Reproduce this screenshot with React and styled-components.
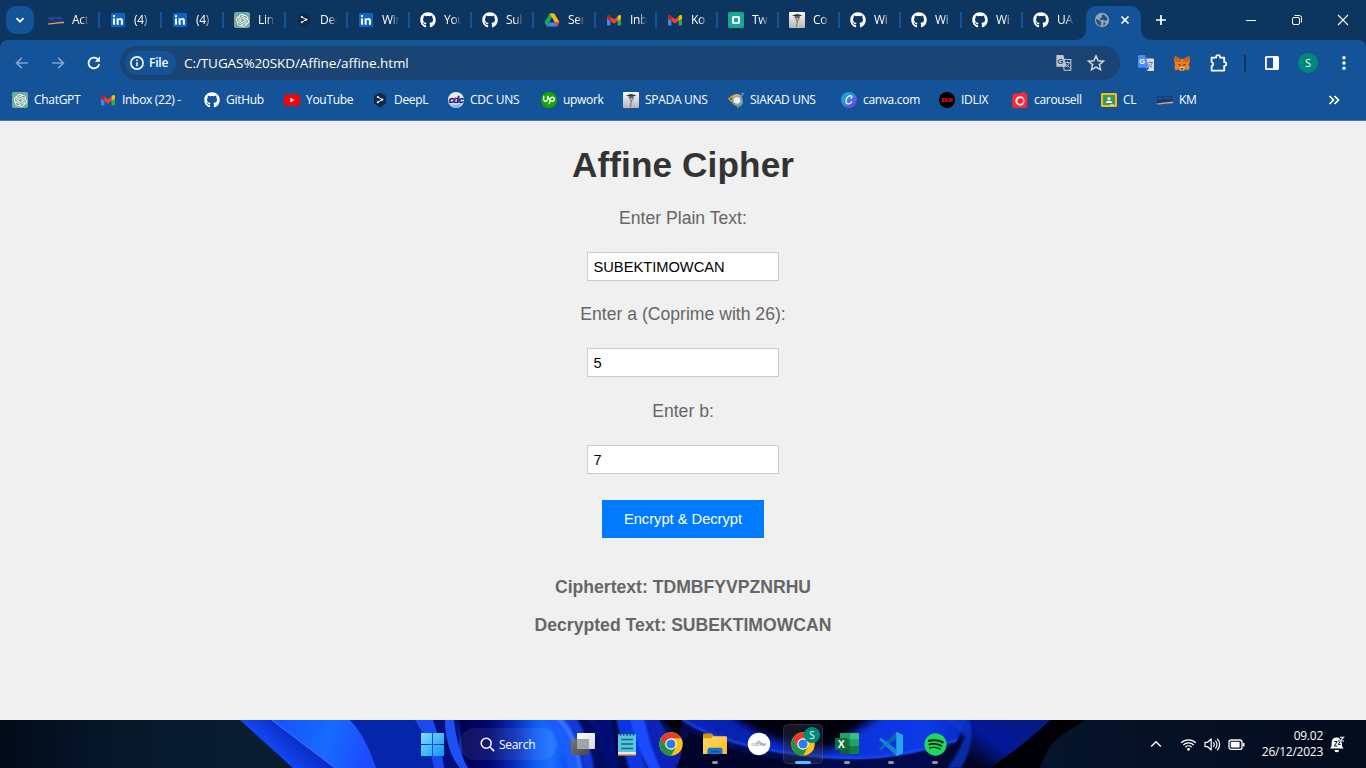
import React from 'react';
import styled, { createGlobalStyle, css } from 'styled-components';
import { FaGithub, FaSpotify } from 'react-icons/fa';
import { SiOpenai, SiUpwork } from 'react-icons/si';

const GlobalStyle = createGlobalStyle`
  * { box-sizing: border-box; }
  body { margin: 0; overflow: hidden; }
  svg { display: block; flex: none; }
`;

const uiFont = css`font-family: 'Open Sans', 'Noto Sans', sans-serif;`;

const Screen = styled.div`
  width: 1366px;
  height: 768px;
  display: flex;
  flex-direction: column;
  overflow: hidden;
  background: #f0f0f0;
`;

/* ---------- Browser chrome ---------- */

const TabStrip = styled.div`
  ${uiFont}
  height: 40px;
  flex: none;
  display: flex;
  background: #0c3560;
  color: #fff;
  padding-left: 6px;
`;

const TabSearch = styled.button`
  width: 28px;
  height: 28px;
  margin: 6px 4px 0 0;
  padding: 0;
  border: 0;
  border-radius: 10px;
  background: #155399;
  display: flex;
  align-items: center;
  justify-content: center;
`;

const Tab = styled.div`
  width: ${(p) => p.$width}px;
  flex: none;
  height: 40px;
  display: flex;
  align-items: center;
  gap: 8px;
  padding-left: 10px;
  background: linear-gradient(#155399, #155399) no-repeat right 12px / 2px 16px;
  background-size: ${(p) => (p.$last ? '0 0' : '2px 16px')};
`;

const TabTitle = styled.span`
  width: 17px;
  overflow: hidden;
  white-space: nowrap;
  font-size: 12px;
  line-height: 18px;
  letter-spacing: -0.3px;
  mask-image: linear-gradient(90deg, #000 50%, transparent 100%);
`;

const ActiveTab = styled.div`
  width: 55px;
  height: 34px;
  margin: 6px 0 0 2px;
  padding: 0 10px 6px 8px;
  border-radius: 10px 10px 0 0;
  background: #155399;
  display: flex;
  align-items: center;
  justify-content: space-between;
  position: relative;
  &::before, &::after {
    content: '';
    position: absolute;
    bottom: 0;
    width: 10px;
    height: 10px;
  }
  &::before {
    left: -10px;
    background: radial-gradient(circle at 0 0, transparent 9.6px, #155399 10.2px);
  }
  &::after {
    right: -10px;
    background: radial-gradient(circle at 100% 0, transparent 9.6px, #155399 10.2px);
  }
`;

const StripButton = styled.div`
  width: ${(p) => p.$width}px;
  height: 40px;
  flex: none;
  display: flex;
  align-items: center;
  justify-content: center;
`;

const WindowControls = styled.div`
  display: flex;
  margin-left: auto;
`;

const ChromeBody = styled.div`
  background: #0c3560;
  flex: none;
`;

const Toolbar = styled.div`
  ${uiFont}
  height: 46px;
  padding: 0 4px;
  border-radius: 8px 8px 0 0;
  background: #155399;
  display: flex;
  align-items: center;
  color: #fff;
`;

const ToolButton = styled.div`
  width: 36px;
  height: 36px;
  display: flex;
  align-items: center;
  justify-content: center;
  flex: none;
`;

const Omnibox = styled.div`
  width: 1000px;
  height: 34px;
  margin: 0 8px;
  padding: 0 15px 0 5px;
  border-radius: 17px;
  background: #1a4473;
  display: flex;
  align-items: center;
`;

const SchemeChip = styled.div`
  width: 51px;
  height: 24px;
  border-radius: 12px;
  background: #155399;
  display: flex;
  align-items: center;
  gap: 5px;
  padding-left: 5px;
  font-size: 12px;
  font-weight: 600;
  letter-spacing: -0.2px;
  line-height: 24px;
`;

const Address = styled.span`
  margin-left: 8px;
  flex: 1;
  font-size: 13.5px;
  letter-spacing: -0.08px;
  line-height: 20px;
`;

const OmniActions = styled.div`
  display: flex;
  gap: 15px;
  align-items: center;
`;

const Divider = styled.div`
  width: 2px;
  height: 17px;
  margin: 0 8px;
  background: #0c3560;
`;

const Avatar = styled.div`
  width: 20px;
  height: 20px;
  border-radius: 50%;
  background: #00897b;
  font-size: 11px;
  line-height: 20px;
  text-align: center;
`;

const BookmarkBar = styled.div`
  ${uiFont}
  height: 35px;
  padding: 0 20px 6px 12px;
  background: #155399;
  border-bottom: 1px solid #4479b8;
  display: flex;
  align-items: center;
  color: #fff;
`;

const Bookmark = styled.div`
  width: ${(p) => p.$width}px;
  flex: none;
  display: flex;
  align-items: center;
  gap: 6px;
  font-size: 12px;
  line-height: 18px;
  letter-spacing: -0.3px;
  white-space: nowrap;
`;

const Overflow = styled.div`
  margin-left: auto;
  padding-right: 6px;
`;

/* ---------- Page ---------- */

const Page = styled.main`
  height: 599px;
  flex: none;
  padding-top: 24px;
  background: #f0f0f0;
  font-family: 'Liberation Sans', Arial, sans-serif;
  display: flex;
  flex-direction: column;
  align-items: center;
`;

const Title = styled.h1`
  margin: 0 0 23px;
  font-size: 35.2px;
  line-height: 40px;
  letter-spacing: 0.1px;
  color: #333;
`;

const Field = styled.label`
  display: flex;
  flex-direction: column;
  align-items: center;
  margin-bottom: ${(p) => p.$after}px;
  font-size: 17.6px;
  line-height: 20px;
  color: #666;
`;

const TextInput = styled.input`
  width: 192px;
  height: 29px;
  margin-top: 24px;
  padding: 0 5.5px;
  border: 1px solid #ccc;
  background: #fff;
  color: #000;
  font-family: inherit;
  font-size: 14.667px;
  outline: none;
`;

const SubmitButton = styled.button`
  width: 162px;
  height: 38px;
  margin-bottom: 39px;
  padding: 0;
  border: 0;
  background: #007bff;
  color: #fff;
  font-family: inherit;
  font-size: 14.667px;
  white-space: nowrap;
`;

const Result = styled.p`
  margin: 0 0 18px;
  font-size: 17.6px;
  line-height: 20px;
  font-weight: bold;
  color: #666;
`;

/* ---------- Taskbar ---------- */

const Taskbar = styled.footer`
  ${uiFont}
  height: 48px;
  flex: none;
  position: relative;
  color: #fff;
  background: #061226;
`;

const Wallpaper = styled.svg`
  position: absolute;
  inset: 0;
`;

const TaskRow = styled.div`
  position: relative;
  height: 48px;
  display: flex;
  align-items: center;
  padding-left: 410px;
`;

const TaskItem = styled.div`
  width: 40px;
  height: 40px;
  margin: 0 2px;
  border-radius: 5px;
  flex: none;
  position: relative;
  display: flex;
  align-items: center;
  justify-content: center;
  background: ${(p) => (p.$active ? 'rgba(60, 60, 80, 0.35)' : 'transparent')};
  box-shadow: ${(p) => (p.$active ? 'inset 0 0 0 1px rgba(255,255,255,0.1)' : 'none')};
`;

const Indicator = styled.span`
  position: absolute;
  bottom: 0;
  left: 50%;
  width: ${(p) => (p.$active ? 16 : 6)}px;
  height: 3px;
  border-radius: 2px;
  transform: translateX(-50%);
  background: ${(p) => (p.$active ? '#4cc2ff' : '#9295a8')};
`;

const SearchPill = styled.div`
  width: 98px;
  height: 32px;
  margin: 0 4px 0 5px;
  padding-left: 21px;
  border-radius: 16px;
  background: rgba(255, 255, 255, 0.07);
  display: flex;
  align-items: center;
  gap: 4px;
  font-size: 12px;
  letter-spacing: -0.3px;
`;

const ProfileBadge = styled.span`
  position: absolute;
  top: 3px;
  right: 3px;
  width: 16px;
  height: 16px;
  border-radius: 50%;
  background: #00897b;
  font-size: 10px;
  line-height: 16px;
  text-align: center;
`;

const Tray = styled.div`
  margin-left: auto;
  display: flex;
  align-items: center;
  padding-right: 20px;
`;

const TrayIcon = styled.div`
  width: ${(p) => p.$width}px;
  display: flex;
  justify-content: center;
`;

const Clock = styled.div`
  width: 71px;
  margin-right: 6px;
  text-align: right;
  font-size: 12px;
  line-height: 16px;
  letter-spacing: -0.25px;
`;

/* ---------- Icons ---------- */

const Icon = ({ size = 16, w, h, box = '0 0 16 16', children, ...rest }) => (
  <svg width={w ?? size} height={h ?? size} viewBox={box} fill="none" {...rest}>{children}</svg>
);

const KmIcon = () => (
  <Icon>
    <path d="M0 4.5 15 4 15.5 9 0 11z" fill="#14376f" />
    <path d="M1 6.5h5M7 6h7" stroke="#2554a0" strokeWidth="1.4" />
    <path d="M0 11.5C6 11 11 9.5 16 9.7v1.6C10 11 6 12.5 0 12.4z" fill="#f0a060" />
  </Icon>
);

const LinkedInIcon = () => (
  <Icon>
    <rect x="1" y="1" width="14" height="14" rx="1" fill="#0a66c2" />
    <rect x="3" y="6.3" width="2" height="6.4" fill="#fff" />
    <circle cx="4" cy="4.1" r="1.2" fill="#fff" />
    <path d="M6.6 6.3h1.9v.9c.4-.7 1.1-1.1 2-1.1 1.9 0 2.4 1.2 2.4 2.9v3.7h-2V9.4c0-.9-.1-1.6-1.1-1.6s-1.2.8-1.2 1.6v3.3h-2z" fill="#fff" />
  </Icon>
);

const OpenAiTile = styled.span`
  width: 16px;
  height: 16px;
  border-radius: 2px;
  background: #75a99c;
  color: #fff;
  display: flex;
  align-items: center;
  justify-content: center;
  flex: none;
`;
const ChatGptIcon = () => <OpenAiTile><SiOpenai size={13} /></OpenAiTile>;

const DeeplIcon = () => (
  <Icon>
    <path d="M8 .6 14 4v7.3L9.6 14v2L7 14.7 2 11.5V4z" fill="#0f2b46" />
    <path d="M5.8 5 10 7.6 5.8 10.3" stroke="#fff" strokeWidth="1" />
    <circle cx="5.8" cy="5" r="1" fill="#fff" /><circle cx="10.2" cy="7.6" r="1.2" fill="#fff" /><circle cx="5.8" cy="10.3" r="1" fill="#fff" />
  </Icon>
);

const GitHubIcon = () => <FaGithub size={16} color="#fff" />;

const DriveIcon = () => (
  <Icon>
    <path d="M5.6 1.5h4.8L5.3 10.3 2.8 14.4.5 10.3z" fill="#11a861" />
    <path d="M5.6 1.5h4.8l5.1 8.8h-4.9z" fill="#ffba00" />
    <path d="M5.3 10.3h10.2l-2.4 4.1H2.8z" fill="#4285f4" />
    <path d="M8 5.7 5.4 10.3h5.2z" fill="#0c3560" />
    <path d="M10.6 10.3h4.9l-2.4 4.1z" fill="#ea4335" />
  </Icon>
);

const GmailIcon = () => (
  <Icon>
    <path d="M1 3.6 4.4 6v7.6H2c-.6 0-1-.4-1-1z" fill="#4285f4" />
    <path d="M15 3.6 11.6 6v7.6H14c.6 0 1-.4 1-1z" fill="#34a853" />
    <path d="M4.4 9V4.6L8 7.3l3.6-2.7V9L8 11.7z" fill="#ea4335" />
    <path d="M11.6 4.6 12.6 3.3c1-.9 2.4-.2 2.4 1V6.4L11.6 9z" fill="#fbbc04" />
    <path d="M4.4 4.6 3.4 3.3C2.4 2.4 1 3.1 1 4.3v2.1L4.4 9z" fill="#c5221f" />
  </Icon>
);

const TwIcon = () => (
  <Icon>
    <rect width="16" height="16" rx="2" fill="#1aa59a" />
    <rect x="5" y="5" width="6" height="6" rx=".5" stroke="#fff" strokeWidth="2" />
  </Icon>
);

const SpadaIcon = () => (
  <Icon>
    <defs><linearGradient id="spada" x1="0" x2="0" y1="0" y2="1"><stop stopColor="#fafafa" /><stop offset="1" stopColor="#b5b5b5" /></linearGradient></defs>
    <rect width="16" height="16" rx="1" fill="url(#spada)" />
    <path d="M3 3.6 8 2l5.5 1.3L8.5 5z" fill="#333" />
    <path d="M5.5 4.5 11 4.4l-.3 2.2-5-.3z" fill="#666" />
    <path d="M10 6.5 8.2 9.5 7.6 15M7 6.3l1 3" stroke="#777" strokeWidth="1.1" />
  </Icon>
);

const GlobeIcon = () => (
  <Icon>
    <circle cx="8" cy="8" r="7.2" fill="#9aa0a6" />
    <path d="M8.6 2.2c1.8.6 4.6 2.7 4.9 5.3l-2.3 1.4-2.2-1.1-2.4.4-.7-1.6 1.9-1.1V3.8zM2 7l3.2 1.3 2.1 2.1-.6 1.4.1 2.1C4.3 13.5 2 11 2 7zm7.6 3.6 2.2.2-1.4 2.1-1.2.3z" fill="#17508f" />
  </Icon>
);

const YouTubeIcon = () => (
  <Icon><rect y="2.4" width="16" height="11.4" rx="2.8" fill="#f00" /><path d="m6.4 5.8 4.2 2.3-4.2 2.3z" fill="#fff" /></Icon>
);

const CdcIcon = () => (
  <Icon>
    <circle cx="8" cy="8" r="8" fill="#e8edf6" />
    <path d="M2 12c3 1 9 1 12-1-1 3-4 5-6 5s-5-2-6-4z" fill="#86b7de" />
    <text x="8" y="10.6" textAnchor="middle" fontFamily="Liberation Sans" fontWeight="bold" fontStyle="italic" fontSize="9.6" letterSpacing="-.6" fill="#1b1b80" stroke="#1b1b80" strokeWidth=".4">cdc</text>
    <path d="M5.5 8.8l2-3.5" stroke="#d5283c" strokeWidth="1" />
  </Icon>
);

const UpTile = styled.span`
  width: 16px;
  height: 16px;
  border-radius: 50%;
  background: #14a800;
  display: flex;
  align-items: center;
  justify-content: center;
  flex: none;
`;
const UpworkIcon = () => <UpTile><SiUpwork size={12} color="#fff" /></UpTile>;

const SiakadIcon = () => (
  <Icon>
    <circle cx="9" cy="8.3" r="5" fill="#e3effa" stroke="#7cae4b" strokeWidth="1.4" />
    <path d="M4.2 5.5C6 2.6 10 2 12.4 4.3" stroke="#e8b53a" strokeWidth="1.7" />
    <path d="M12.5 5 15.4.8M14 9c.6 2-1 4.5-3 5" stroke="#4aa3df" strokeWidth="1.6" />
    <path d="M4.6 3.7.9 6.9l3.2 3" stroke="#e29b28" strokeWidth="1.4" />
    <path d="M10 13v3" stroke="#7cae4b" strokeWidth="1.6" />
    <circle cx="9" cy="8.3" r="4" stroke="#b36a8e" strokeWidth=".8" />
  </Icon>
);

const CanvaIcon = () => (
  <Icon>
    <defs><linearGradient id="canva" x1="0" y1="0" x2="1" y2="1"><stop stopColor="#00c4cc" /><stop offset=".5" stopColor="#3b7fe0" /><stop offset="1" stopColor="#7d2ae8" /></linearGradient></defs>
    <circle cx="8" cy="8" r="8" fill="url(#canva)" />
    <path d="M10 6.2c1.3-.5 1.3-2.4-.4-2.5C7 3.6 5 6.7 5 9.3c0 3.4 3.6 3.6 5.7.6" stroke="#fff" strokeWidth="1.2" strokeLinecap="round" />
  </Icon>
);

const IdlixIcon = () => (
  <Icon>
    <circle cx="8" cy="8" r="8" fill="#000" />
    <text x="8" y="9.8" textAnchor="middle" fontFamily="Liberation Sans" fontWeight="bold" fontSize="4.6" fill="#e00d12" stroke="#e00d12" strokeWidth=".2" textLength="11" lengthAdjust="spacingAndGlyphs">IDLIX</text>
  </Icon>
);

const CarousellIcon = () => (
  <Icon>
    <rect x=".3" y="1.5" width="15" height="14.5" rx="2.5" fill="#ff2636" />
    <rect x="9.5" y="0" width="4" height="3" rx="1" fill="#ff2636" />
    <path d="M10.8 6.2a3.8 3.8 0 1 0 0 5.4" stroke="#fff" strokeWidth="1.9" />
    <path d="M11 6.4a3.8 3.8 0 0 1 0 5" stroke="#ffd5d8" strokeWidth="1.3" />
  </Icon>
);

const ClassroomIcon = () => (
  <Icon>
    <rect y="1" width="16" height="14" rx="1.2" fill="#f5ba14" />
    <rect x="2" y="3" width="12" height="10" fill="#3a9b58" />
    <circle cx="8" cy="6.6" r="1.5" fill="#fff" />
    <path d="M4.8 11c0-3 6.4-3 6.4 0z" fill="#fff" />
    <rect x="9" y="12.4" width="4" height="1" fill="#e6e6e6" />
  </Icon>
);

const TranslateMono = () => (
  <Icon>
    <path d="M6.5 4.5h8.3v10.8H8.2z" stroke="#c0c8d2" strokeWidth="1.1" />
    <path d="M.4 0h6.9l3.3 11.7H.4z" fill="#c0c8d2" />
    <text x="1.6" y="8.6" fontFamily="Liberation Sans" fontWeight="bold" fontSize="7.5" fill="#1a4473">G</text>
    <path d="M9 7.6h5M11.5 6.4v1.2M13.2 7.8c-.4 2-1.8 3.4-3 4M10.4 9.2l3.2 3.8" stroke="#c0c8d2" strokeWidth=".9" />
  </Icon>
);

const TranslateColor = () => (
  <Icon>
    <path d="M6 3.5h9c.6 0 1 .4 1 1V15c0 .6-.4 1-1 1H9z" fill="#dde0e4" />
    <path d="M1 0h6l4.3 12.8H1a1 1 0 0 1-1-1V1a1 1 0 0 1 1-1z" fill="#4b8bf5" />
    <path d="m8 12.8h3.3L9.3 16z" fill="#3058b8" />
    <text x="1.3" y="8.8" fontFamily="Liberation Sans" fontWeight="bold" fontSize="7.4" fill="#fff">G</text>
    <path d="M10 7.6h5M12.5 6.4v1.2M14 7.8c-.4 2-1.4 3.2-2.4 4M11.2 9.2l3 3.8" stroke="#6d7988" strokeWidth=".9" />
  </Icon>
);

const StarIcon = () => (
  <Icon size={18} box="0 0 18 18"><path d="m9 1.9 2.1 4.8 5.2.5-3.9 3.4 1.1 5.1L9 13l-4.5 2.7 1.1-5.1-3.9-3.4 5.2-.5z" stroke="#d0d7df" strokeWidth="1.5" /></Icon>
);

const FoxIcon = () => (
  <Icon>
    <path d="M.8.9 6.5 4h3L15.2.9 16 6l-1.2 3.5.9 2.8-1 2.9-3.3-.8L9.5 16h-3l-1.9-1.6-3.3.8-1-2.9.9-2.8L0 6z" fill="#e8821e" />
    <path d="M.8.9 6.5 4l.6 3-5.8-.4zM15.2.9 9.5 4l-.6 3 5.8-.4z" fill="#cf6316" />
    <path d="m3.4 8.7 3 .6.4 2zM12.6 8.7l-3 .6-.4 2z" fill="#3c2a1e" />
    <path d="M5.3 12.5 7 12h2l1.7.5-.8 2.4H6.1z" fill="#d9c7b5" />
    <path d="M6.6 13.2h2.8l-.2 1.4H6.8z" fill="#23180f" />
  </Icon>
);

const PuzzleIcon = () => (
  <Icon size={18} box="0 0 18 18">
    <path d="M2.6 3.6h4.6V3a1.9 1.9 0 0 1 3.8 0v.6h4.2v4.6h.3a1.8 1.8 0 0 1 0 3.6h-.3v4.8H2.6v-4.4a2.2 2.2 0 0 0 0-4.2z" stroke="#fff" strokeWidth="1.8" strokeLinejoin="round" />
  </Icon>
);

const PanelIcon = () => (
  <Icon><rect x="1.9" y="1.9" width="12.2" height="12.2" rx=".6" stroke="#fff" strokeWidth="1.8" /><path d="M9 2h5v12H9z" fill="#fff" /></Icon>
);

const ArrowBack = () => (
  <Icon><path d="M14 8H3M7.8 2.8 2.6 8l5.2 5.2" stroke="#7ea3cf" strokeWidth="1.7" /></Icon>
);

const ArrowForward = () => (
  <Icon><path d="M2 8h11M8.2 2.8 13.4 8l-5.2 5.2" stroke="#7ea3cf" strokeWidth="1.7" /></Icon>
);

const ReloadIcon = () => (
  <Icon><path d="M13.2 9.2A5.4 5.4 0 1 1 11.8 4.2l1.4 1.4" stroke="#fff" strokeWidth="1.8" /><path d="M14 1.6v5.2H8.8z" fill="#fff" /></Icon>
);

const ChromeLogo = () => (
  <Icon size={24} box="0 0 48 48">
    <circle cx="24" cy="24" r="23.5" fill="#fbc116" />
    <path d="M4.1 12.5A23 23 0 0 0 24 47.4l10-17.6L24 24 14 29.8z" fill="#229342" />
    <path d="M3.8 12.5A23.5 23.5 0 0 1 44.2 12.5H24L14 29.8z" fill="#e33b2e" />
    <circle cx="24" cy="24" r="11.5" fill="#fff" />
    <circle cx="24" cy="24" r="9.2" fill="#2b7de9" />
  </Icon>
);

const StartLogo = () => (
  <Icon size={24} box="0 0 24 24">
    <defs><linearGradient id="win" gradientUnits="userSpaceOnUse" x1="0" y1="0" x2="24" y2="24"><stop stopColor="#8be4ff" /><stop offset="1" stopColor="#0c95f0" /></linearGradient></defs>
    <path d="M1 1h11v11H1zM13 1h11v11H13zM1 13h11v11H1zM13 13h11v11H13z" fill="url(#win)" />
  </Icon>
);

const TaskViewIcon = () => (
  <Icon size={24} box="0 0 24 24">
    <defs>
      <linearGradient id="tv1" x1="0" x2="1" y1="0" y2="1"><stop stopColor="#fff" /><stop offset="1" stopColor="#d8d8d8" /></linearGradient>
      <linearGradient id="tv2" x1="0" x2="1" y1="0" y2="1"><stop stopColor="#777" /><stop offset="1" stopColor="#484848" /></linearGradient>
    </defs>
    <rect x="6" y="1" width="18" height="16" rx="1" fill="url(#tv1)" />
    <rect x="0" y="7" width="18" height="16" rx="1" fill="url(#tv2)" />
    <path d="M6 7h12v10H6z" fill="#a5a5a5" />
  </Icon>
);

const NotepadIcon = () => (
  <Icon size={24} box="0 0 24 24">
    <rect x="3" y="2" width="18" height="20" rx="1" fill="#58c5dd" />
    <path d="M3 20h18v3.4H3z" fill="#e9e9e9" /><path d="M3 22.5h18V24H3z" fill="#b4642e" />
    <path d="M5.5.8v3M8.7.8v3M12 .8v3M15.3.8v3M18.5.8v3" stroke="#124f6b" strokeWidth="1.6" />
    <path d="M6 7.5h12M6 12h12M6 16.5h12" stroke="#146a8c" strokeWidth="1.6" />
  </Icon>
);

const ExplorerIcon = () => (
  <Icon size={24} box="0 0 24 24">
    <defs><linearGradient id="fold" x1="0" x2="1" y1="0" y2="1"><stop stopColor="#ffdc65" /><stop offset="1" stopColor="#f8b927" /></linearGradient></defs>
    <path d="M0 2.5a1 1 0 0 1 1-1h7.5L11 4v5H0z" fill="#d9940b" />
    <path d="M0 6.2h8l2-2h13a1 1 0 0 1 1 1V22H0z" fill="url(#fold)" />
    <path d="M4.5 22v-4a2.2 2.2 0 0 1 2.2-2.2h10.6a2.2 2.2 0 0 1 2.2 2.2v4z" fill="#1673c4" />
    <path d="M8 19.5h8" stroke="#0c5096" strokeWidth="1.6" />
  </Icon>
);

const RoundAppIcon = () => (
  <Icon size={24} box="0 0 24 24">
    <circle cx="12" cy="12" r="11.2" fill="#fff" />
    <path d="M8 11.4l2.4-2 1.4-1.4 1.6 1.4 3 2z" fill="#dcb3ac" />
    <text x="12" y="14.4" fontSize="2.6" fontFamily="Liberation Sans" textAnchor="middle" textLength="15" lengthAdjust="spacingAndGlyphs" fill="#555">CLOUD SPARK</text>
  </Icon>
);

const ExcelIcon = () => (
  <Icon size={24} box="0 0 24 24">
    <path d="M5 1h9.5v7H5z" fill="#21a366" /><path d="M14.5 1H24v6.8h-9.5z" fill="#33c481" />
    <path d="M5 7.5h9.5v7.3H5z" fill="#107c41" /><path d="M14.5 7.5H24v7.3h-9.5z" fill="#21a366" />
    <path d="M5 14.5h19V22H5z" fill="#185c37" /><path d="M14.5 14.5H24V22h-9.5z" fill="#107c41" />
    <rect x="0" y="6" width="12.5" height="12" rx=".8" fill="#0d703a" />
    <text x="6.2" y="15.8" textAnchor="middle" fontFamily="Liberation Sans" fontWeight="bold" fontSize="10.5" fill="#fff">X</text>
  </Icon>
);

const CodeIcon = () => (
  <Icon size={24} box="0 0 24 24">
    <path d="M17.5 0v6.6L2.6 18.1c-.4.3-.9.3-1.2 0L.3 17.1a.8.8 0 0 1 0-1.2z" fill="#0b66b0" />
    <path d="M17.5 24v-6.6L2.6 5.9c-.4-.3-.9-.3-1.2 0L.3 6.9a.8.8 0 0 0 0 1.2z" fill="#1583cf" />
    <path d="M17.5 0 23 2.6c.6.3 1 .9 1 1.5v15.8c0 .6-.4 1.2-1 1.5L17.5 24c-.6.2-1.2.1-1.7-.4.6.6 1.7.1 1.7-.8V1.2c0-.9-1.1-1.4-1.7-.8.5-.5 1.1-.6 1.7-.4z" fill="#29a3ec" />
    <path d="M17.5.1 24 3v18l-6.5 2.9z" fill="#29a3ec" />
  </Icon>
);

const SpotifyDisc = styled.span`
  border-radius: 50%;
  border: 1px solid transparent;
  background: #07210f content-box;
  & > svg { margin: -1px; }
`;

const WifiIcon = () => (
  <Icon size={17} box="0 0 17 17">
    <path d="M1.2 6.8a10.4 10.4 0 0 1 14.6 0M3.3 9a7.4 7.4 0 0 1 10.4 0M5.4 11.2a4.4 4.4 0 0 1 6.2 0" stroke="#fff" strokeWidth="1.2" />
    <circle cx="8.5" cy="13.3" r="1.4" fill="#fff" />
  </Icon>
);

const VolumeIcon = () => (
  <Icon size={17} box="0 0 17 17">
    <path d="M1 6.3h2.6L7.2 3v11L3.6 10.7H1z" stroke="#fff" strokeWidth="1.2" strokeLinejoin="round" />
    <path d="M9.3 6.3a3 3 0 0 1 0 4.4M11.3 4.6a5.4 5.4 0 0 1 0 7.8M13.2 2.8a8 8 0 0 1 0 11.4" stroke="#fff" strokeWidth="1.2" />
  </Icon>
);

const BatteryIcon = () => (
  <Icon size={17} box="0 0 17 17">
    <rect x="1" y="4" width="13" height="9.4" rx="2.2" stroke="#fff" strokeWidth="1.3" />
    <rect x="2.8" y="5.8" width="8.8" height="5.8" rx=".6" fill="#fff" /><path d="M15.7 7v3.4" stroke="#fff" strokeWidth="1.6" />
  </Icon>
);

const BellIcon = () => (
  <Icon size={17} box="0 0 17 17">
    <path d="M1 12.5 2.6 10V6.4a5 5 0 0 1 5-5c4 0 5.4 2.6 5.4 5V10l1.6 2.5z" fill="#fff" />
    <path d="M5.5 14h4.6a2.3 2.3 0 0 1-4.6 0z" fill="#fff" />
    <path d="M9.5 0h7.5v6.4h-5z" fill="#051126" />
    <path d="M5.2 5.5h2.9L5.3 10h3M9 5h2.5L9.2 8.4h2.5" stroke="#051126" strokeWidth="1" />
    <path d="M11 1.2h3.6l-3.4 3.8h3.8" stroke="#fff" strokeWidth="1.1" />
  </Icon>
);

const Bloom = () => (
  <Wallpaper width="1366" height="48" viewBox="0 0 1366 48" preserveAspectRatio="none">
    <defs>
      <filter id="soft" x="-20%" y="-40%" width="140%" height="180%"><feGaussianBlur stdDeviation="1.2" /></filter>
      <filter id="softer" x="-20%" y="-60%" width="140%" height="220%"><feGaussianBlur stdDeviation="4" /></filter>
      <linearGradient id="night" x1="0" x2="1"><stop stopColor="#020a18" /><stop offset=".25" stopColor="#06172a" /><stop offset=".6" stopColor="#0a1d30" /></linearGradient>
      <linearGradient id="petalA" gradientUnits="userSpaceOnUse" x1="256" y1="36" x2="285" y2="5"><stop stopColor="#1a5cff" /><stop offset=".4" stopColor="#1146f0" /><stop offset="1" stopColor="#0a2cc4" /></linearGradient>
      <linearGradient id="petalB" gradientUnits="userSpaceOnUse" x1="280" y1="0" x2="370" y2="24"><stop stopColor="#1554ff" /><stop offset=".55" stopColor="#176bff" /><stop offset="1" stopColor="#1c4cff" /></linearGradient>
      <linearGradient id="core" gradientUnits="userSpaceOnUse" x1="459" y1="0" x2="612" y2="0">
        <stop stopColor="#01014e" /><stop offset=".2" stopColor="#020672" /><stop offset=".38" stopColor="#0733bc" /><stop offset=".5" stopColor="#0d5cf4" /><stop offset=".6" stopColor="#1a72ff" /><stop offset=".7" stopColor="#1250f0" /><stop offset=".85" stopColor="#061a98" /><stop offset="1" stopColor="#020a5c" />
      </linearGradient>
      <linearGradient id="wave" gradientUnits="userSpaceOnUse" x1="690" y1="0" x2="970" y2="0"><stop stopColor="#0a27c0" /><stop offset=".35" stopColor="#0a2acc" /><stop offset=".6" stopColor="#0c32dc" /><stop offset=".85" stopColor="#0d3ae8" /><stop offset="1" stopColor="#0628b8" /></linearGradient>
      <linearGradient id="tail" gradientUnits="userSpaceOnUse" x1="985" y1="48" x2="1020" y2="0"><stop stopColor="#020526" /><stop offset=".45" stopColor="#04189a" /><stop offset="1" stopColor="#041a86" /></linearGradient>
      <linearGradient id="dusk" gradientUnits="userSpaceOnUse" x1="1040" y1="0" x2="1366" y2="0"><stop stopColor="#06152b" /><stop offset="1" stopColor="#030b1c" /></linearGradient>
    </defs>
    <path d="M0 0h420v48H0z" fill="url(#night)" />
    <path d="M240 0h270v48H293z" fill="#0525aa" />
    <path d="M240 0h40l65 48h-52z" fill="url(#petalA)" />
    <path d="M272 0h78c12 12 20 30 26 48h-41z" fill="url(#petalB)" />
    <path d="M272 0 335 48" stroke="#2e6dff" strokeWidth="1.2" />
    <path d="M433 0h26v48h-18z" fill="#02107c" />
    <path d="M415 0h18c5 14 9 30 11 48h-10C431 30 424 14 415 0z" fill="#1a4af0" />
    <path d="M459 0h160v48H464z" fill="url(#core)" />
    <path d="M445 0h9c2 18 6 34 14 48h-8c-10-12-15-30-15-48z" fill="#1d50f4" />
    <g filter="url(#soft)">
      <path d="M540 0c16 10 24 26 28 52h14C578 24 566 8 556-2z" fill="#1a5cff" />
      <path d="M555-2c14 12 22 30 24 54h3C580 24 572 8 560-2z" fill="#3a78ff" />
      <path d="M564-2c12 12 18 30 20 54h10C592 28 584 10 574-2z" fill="#1239d8" />
      <path d="M576-2c10 14 16 32 18 54h14C604 28 598 10 588-2z" fill="#020a60" />
      <path d="M592-2h30l8 54h-22C604 28 600 12 592-2z" fill="#020c74" />
    </g>
    <path d="M612 0h90v48h-84z" fill="#010a4a" />
    <g filter="url(#soft)">
      <path d="M616-2h16c3 18 8 36 16 54h-18C624 32 620 16 616-2z" fill="#0e35e4" />
      <path d="M630-2h14c6 18 10 36 18 54h-12C640 32 634 16 630-2z" fill="#1a4cff" />
      <path d="M644-2h12c8 18 14 36 24 54h-18C652 32 648 16 644-2z" fill="#0720b4" />
      <path d="M658-2c12 22 26 40 44 54h-20C670 36 662 16 654-2z" fill="#0a2bc8" opacity=".8" />
    </g>
    <path d="M664 0h40v30C686 22 674 12 664 0z" fill="#00020c" />
    <path d="M682 0h290v30c-38 9-84 12-122 12C790 42 716 28 682 0z" fill="url(#wave)" />
    <g filter="url(#softer)">
      <path d="M735-10h150c-24 18-40 26-54 40-50-4-90-20-110-44z" fill="#00010c" />
      <path d="M840-10h45l-60 40z" fill="#00010c" />
      <path d="M690-6h30l40 30-20 0z" fill="#0a1e9c" opacity=".6" />
    </g>
    <path d="M684 0C716 24 790 38 850 39c44 1 80-10 118-21v30H684C690 40 672 18 684 0z" fill="#020a4c" />
    <path d="M690 12c30 18 70 26 110 30v6H676c8-14 4-24 14-36z" fill="#01042a" />
    <path d="M682-1C716 24 790 37 850 38c44 1 80-10 118-21" stroke="#2450f0" strokeWidth="1.8" fill="none" filter="url(#soft)" />
    <path d="M966 0h120L1035 48h-90z" fill="url(#tail)" />
    <path d="M930 48c10-16 24-24 36-31l6 4-10 27z" fill="#010836" />
    <path d="M945 0h24c6 14 2 32-8 48h-14c10-12 14-22 18-32-6-4-10-10-20-16z" fill="#0a3ad4" opacity=".7" filter="url(#soft)" />
    <path d="M1050 0h40l-48 48h-52c20-14 42-30 60-48z" fill="#000106" />
    <path d="M1085 0h281v48h-326c5-14 10-24 18-30z" fill="url(#dusk)" />
  </Wallpaper>
);

/* ---------- Data ---------- */

const tabs = [
  [KmIcon, 'Act'], [LinkedInIcon, '(4)'], [LinkedInIcon, '(4)'], [ChatGptIcon, 'Lin'],
  [DeeplIcon, 'Dee'], [LinkedInIcon, 'Win'], [GitHubIcon, 'You'], [GitHubIcon, 'Sub'],
  [DriveIcon, 'Ser'], [GmailIcon, 'Inb'], [GmailIcon, 'Ko'], [TwIcon, 'Tw'],
  [SpadaIcon, 'Co'], [GitHubIcon, 'Wi'], [GitHubIcon, 'Wi'], [GitHubIcon, 'Wi'], [GitHubIcon, 'UA'],
];

const bookmarks = [
  [ChatGptIcon, 'ChatGPT', 88], [GmailIcon, 'Inbox (22) -', 104], [GitHubIcon, 'GitHub', 80],
  [YouTubeIcon, 'YouTube', 88], [DeeplIcon, 'DeepL', 76], [CdcIcon, 'CDC UNS', 93],
  [UpworkIcon, 'upwork', 82], [SpadaIcon, 'SPADA UNS', 105], [SiakadIcon, 'SIAKAD UNS', 113],
  [CanvaIcon, 'canva.com', 98], [IdlixIcon, 'IDLIX', 73], [CarousellIcon, 'carousell', 89],
  [ClassroomIcon, 'CL', 56], [KmIcon, 'KM', 60],
];

const BrowserChrome = () => (
  <>
    <TabStrip>
      <TabSearch><Icon size={12} box="0 0 12 12"><path d="m2.5 4.2 3.5 3.5 3.5-3.5" stroke="#fff" strokeWidth="1.8" /></Icon></TabSearch>
      {tabs.map(([Glyph, title], i) => (
        <Tab key={i} $width={i < 9 ? 62 : 61} $last={i === tabs.length - 1}>
          <Glyph />
          <TabTitle>{title}</TabTitle>
        </Tab>
      ))}
      <ActiveTab>
        <GlobeIcon />
        <Icon size={12} box="0 0 12 12"><path d="m2.5 2.5 7 7m0-7-7 7" stroke="#fff" strokeWidth="1.7" /></Icon>
      </ActiveTab>
      <StripButton $width={40}><Icon size={12} box="0 0 12 12"><path d="M6 1v10M1 6h10" stroke="#fff" strokeWidth="1.7" /></Icon></StripButton>
      <WindowControls>
        <StripButton $width={46}><Icon size={12} box="0 0 12 12"><path d="M1 6.5h10" stroke="#fff" /></Icon></StripButton>
        <StripButton $width={46}><Icon size={12} box="0 0 12 12"><rect x="1.5" y="3.5" width="7" height="7" rx="1.5" stroke="#fff" /><path d="M3.5 1.5h4.8a2.2 2.2 0 0 1 2.2 2.2v4.8" stroke="#fff" /></Icon></StripButton>
        <StripButton $width={46}><Icon size={12} box="0 0 12 12"><path d="m1 1 10 10M11 1 1 11" stroke="#fff" strokeWidth="1.1" /></Icon></StripButton>
      </WindowControls>
    </TabStrip>
    <ChromeBody>
      <Toolbar>
        <ToolButton><ArrowBack /></ToolButton>
        <ToolButton><ArrowForward /></ToolButton>
        <ToolButton><ReloadIcon /></ToolButton>
        <Omnibox>
          <SchemeChip>
            <Icon size={14} box="0 0 14 14"><circle cx="7" cy="7" r="6.1" stroke="#fff" strokeWidth="1.6" /><path d="M7 6.2v4M7 3.5v1.5" stroke="#fff" strokeWidth="1.5" /></Icon>
            File
          </SchemeChip>
          <Address>C:/TUGAS%20SKD/Affine/affine.html</Address>
          <OmniActions><TranslateMono /><StarIcon /></OmniActions>
        </Omnibox>
        <ToolButton><TranslateColor /></ToolButton>
        <ToolButton><FoxIcon /></ToolButton>
        <ToolButton><PuzzleIcon /></ToolButton>
        <Divider />
        <ToolButton><PanelIcon /></ToolButton>
        <ToolButton><Avatar>S</Avatar></ToolButton>
        <ToolButton><Icon><circle cx="8" cy="2.7" r="1.7" fill="#fff" /><circle cx="8" cy="8" r="1.7" fill="#fff" /><circle cx="8" cy="13.3" r="1.7" fill="#fff" /></Icon></ToolButton>
      </Toolbar>
      <BookmarkBar>
        {bookmarks.map(([Glyph, name, width]) => (
          <Bookmark key={name} $width={width}><Glyph />{name}</Bookmark>
        ))}
        <Overflow><Icon size={12} box="0 0 12 12"><path d="m1.5 2 4 4-4 4M6.5 2l4 4-4 4" stroke="#fff" strokeWidth="1.7" /></Icon></Overflow>
      </BookmarkBar>
    </ChromeBody>
  </>
);

const CipherPage = () => (
  <Page>
    <Title>Affine Cipher</Title>
    <Field $after={23}>Enter Plain Text:<TextInput defaultValue="SUBEKTIMOWCAN" /></Field>
    <Field $after={24}>Enter a (Coprime with 26):<TextInput defaultValue="5" /></Field>
    <Field $after={26}>Enter b:<TextInput defaultValue="7" /></Field>
    <SubmitButton>Encrypt &amp; Decrypt</SubmitButton>
    <Result>Ciphertext: TDMBFYVPZNRHU</Result>
    <Result>Decrypted Text: SUBEKTIMOWCAN</Result>
  </Page>
);

const SystemBar = () => (
  <Taskbar>
    <Bloom />
    <TaskRow>
      <TaskItem><StartLogo /></TaskItem>
      <SearchPill>
        <Icon size={15} box="0 0 15 15"><circle cx="6.2" cy="6.2" r="5" stroke="#fff" strokeWidth="1.5" /><path d="m10 10 4.2 4.2" stroke="#fff" strokeWidth="1.7" /></Icon>
        Search
      </SearchPill>
      <TaskItem><TaskViewIcon /></TaskItem>
      <TaskItem><NotepadIcon /></TaskItem>
      <TaskItem><ChromeLogo /></TaskItem>
      <TaskItem><ExplorerIcon /><Indicator /></TaskItem>
      <TaskItem><RoundAppIcon /></TaskItem>
      <TaskItem $active><ChromeLogo /><ProfileBadge>S</ProfileBadge><Indicator $active /></TaskItem>
      <TaskItem><ExcelIcon /><Indicator /></TaskItem>
      <TaskItem><CodeIcon /><Indicator /></TaskItem>
      <TaskItem><SpotifyDisc><FaSpotify size={23} color="#1ed760" /></SpotifyDisc><Indicator /></TaskItem>
      <Tray>
        <TrayIcon $width={32}><Icon size={12} box="0 0 12 12"><path d="m1.2 8.6 4.8-4.8 4.8 4.8" stroke="#fff" strokeWidth="1.4" /></Icon></TrayIcon>
        <TrayIcon $width={32}><WifiIcon /></TrayIcon>
        <TrayIcon $width={16}><VolumeIcon /></TrayIcon>
        <TrayIcon $width={32}><BatteryIcon /></TrayIcon>
        <Clock>09.02<br />26/12/2023</Clock>
        <BellIcon />
      </Tray>
    </TaskRow>
  </Taskbar>
);

export default function App() {
  return (
    <>
      <GlobalStyle />
      <Screen>
        <BrowserChrome />
        <CipherPage />
        <SystemBar />
      </Screen>
    </>
  );
}
